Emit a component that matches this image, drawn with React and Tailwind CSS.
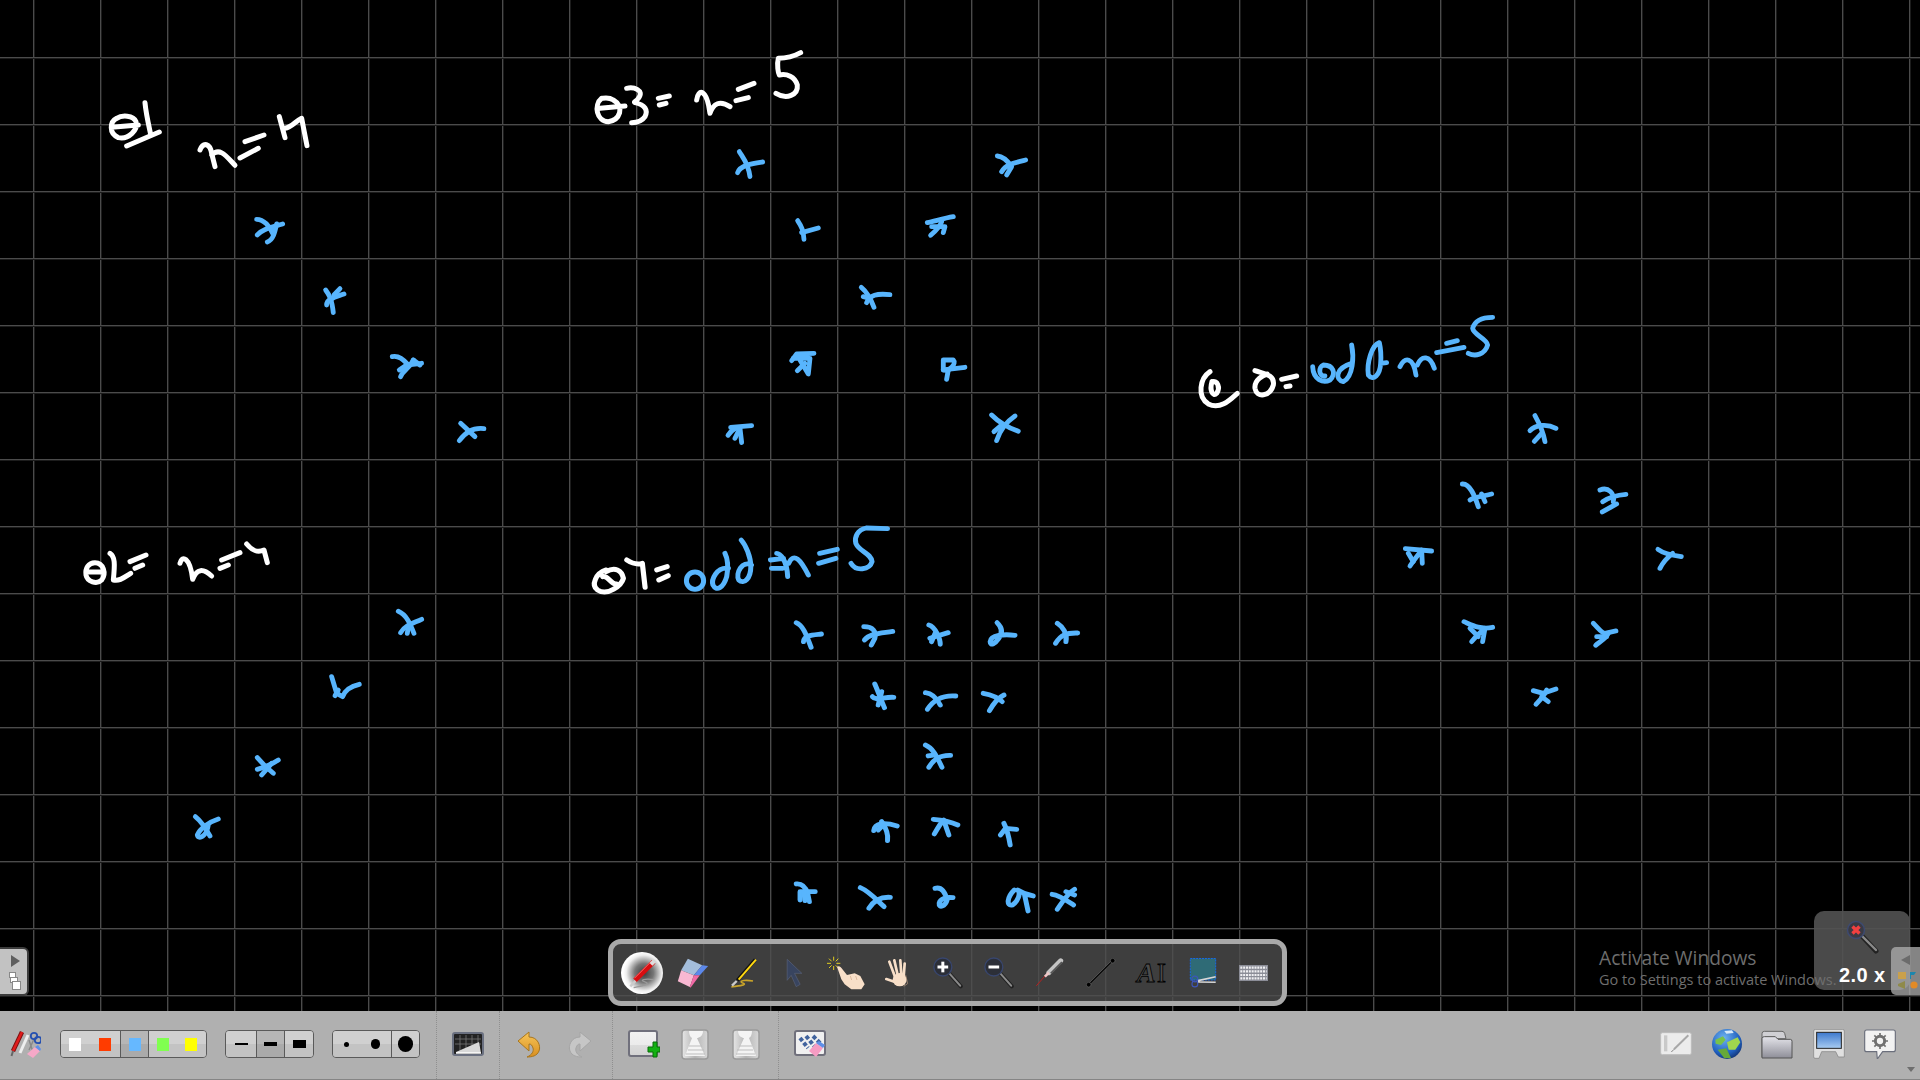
import React from "react";

const sets = [
  {
    t: "translate(60 40) scale(.3333)",
    white: [
      "M170 235C150 245 145 280 175 293C205 300 235 270 228 245C220 225 185 225 170 235M155 262L235 255",
      "M255 188C258 220 265 250 272 283",
      "M200 318L298 276",
      "M420 330C430 305 450 310 455 340L465 380M455 345C480 320 500 350 525 376",
      "M540 354L595 325",
      "M555 305L612 285",
      "M658 230L675 293M675 265C695 262 705 245 725 235L741 317",
    ],
    blue: [
      "M590 538C612 538 630 560 638 580",
      "M592 585C610 565 640 560 668 552",
      "M622 606C640 600 645 575 650 552",
      "M797 750C808 765 815 775 820 818",
      "M800 795C800 775 830 770 852 762",
      "M822 765L840 746",
      "M997 950C1020 945 1035 965 1045 975L1085 970",
      "M1060 960L1080 975",
      "M1022 1010C1030 990 1050 985 1060 960",
      "M1018 990L1040 975",
      "M1202 1150L1245 1190",
      "M1198 1202C1215 1180 1235 1162 1272 1166",
    ],
  },
  {
    t: "translate(570 30) scale(.3333)",
    white: [
      "M95 205C70 225 80 275 115 275C150 270 165 230 130 210C115 200 100 205 95 205M90 235L165 228",
      "M170 175C190 170 225 180 205 205C198 215 190 215 195 218C225 225 235 240 225 260C215 275 195 278 185 278",
      "M265 205L298 198",
      "M268 225L288 220",
      "M380 210C385 175 410 175 420 250C430 220 450 210 480 230",
      "M505 178L552 160",
      "M498 212L535 203",
      "M692 68C670 80 645 85 625 85C620 105 625 130 628 135C650 130 675 140 682 165C685 195 650 210 618 190",
    ],
    blue: [
      "M508 365C520 385 535 400 540 440",
      "M503 428C510 405 550 400 578 396",
      "M1282 378C1305 380 1318 400 1325 410L1310 435",
      "M1295 425C1310 400 1340 398 1367 390",
      "M683 572C695 590 700 600 702 628",
      "M695 608L745 594",
      "M1150 560C1120 565 1090 575 1072 578",
      "M1085 590L1125 590L1120 608",
      "M1082 616C1100 600 1110 590 1115 575",
      "M874 772C890 785 900 800 912 832",
      "M890 818C900 795 920 790 960 794",
      "M880 800L900 805",
      "M732 970L680 972L665 992",
      "M670 985L720 985L715 1032L690 990",
      "M682 1022L705 1000",
      "M1120 990L1120 1020C1140 1025 1160 1000 1150 990Z",
      "M1120 1020L1185 1012",
      "M1135 1020L1130 1048",
      "M482 1192L545 1187",
      "M474 1216C485 1200 500 1190 510 1195L515 1238",
      "M495 1225L505 1205",
      "M1265 1155C1285 1175 1320 1195 1345 1204",
      "M1280 1232C1290 1200 1310 1175 1335 1158",
      "M1272 1205L1295 1185",
    ],
  },
  {
    t: "translate(570 510) scale(.3444 .3333)",
    white: [
      "M105 180C75 190 60 225 80 240C110 260 150 225 155 205C150 180 130 170 105 185M95 200C110 195 120 225 135 222",
      "M165 150C180 160 195 165 210 160L218 232",
      "M252 180L282 170",
      "M258 210L285 197",
    ],
    blue: [
      "M338 212A25 26 0 1 0 388 212A25 26 0 1 0 338 212",
      "M460 175C425 170 410 210 415 225C425 245 445 235 455 200C460 170 460 150 450 130",
      "M527 165C500 150 480 190 490 210C505 225 525 205 525 170C525 140 510 105 497 90",
      "M582 150L620 145M585 175L618 175M600 130C610 130 630 150 632 200M635 160C650 125 670 150 692 195",
      "M722 160L772 145",
      "M725 130L776 118",
      "M922 56L860 54C835 60 825 80 830 100C840 125 875 130 877 155C870 180 830 185 816 160",
      "M657 338C675 345 685 370 700 412",
      "M678 395C680 375 705 375 730 372",
      "M853 350C880 350 890 365 885 385L875 405",
      "M855 390C870 370 900 370 937 364",
      "M1042 345C1060 350 1075 385 1075 403",
      "M1045 385L1098 368",
      "M1050 395L1060 370",
      "M1240 338C1252 350 1260 365 1245 385C1235 400 1220 410 1220 395C1222 375 1260 372 1292 376",
      "M1415 340C1430 350 1445 370 1440 395",
      "M1410 400C1425 375 1440 368 1474 369",
      "M885 522C895 545 905 575 913 593",
      "M878 560C890 575 910 560 940 562",
      "M895 585L905 545",
      "M1032 548C1050 550 1065 565 1075 585",
      "M1038 598C1055 570 1080 555 1120 558",
      "M1200 550C1225 555 1245 565 1255 575",
      "M1218 602C1230 580 1240 565 1260 555",
      "M1032 705C1055 715 1065 740 1080 772",
      "M1042 772C1055 750 1070 735 1105 736",
      "M1040 738L1060 735",
      "M882 962C885 940 910 935 950 948",
      "M905 935C915 950 925 970 922 992",
      "M895 960L905 950",
      "M1055 928C1080 930 1105 935 1126 945",
      "M1058 972C1070 950 1080 935 1085 930L1100 975",
      "M1260 940C1270 960 1275 985 1278 1005",
      "M1250 975L1265 955L1297 958",
      "M657 1122C675 1120 685 1135 690 1150L695 1175",
      "M668 1170L668 1145L712 1145",
      "M682 1172L680 1150",
      "M843 1133C870 1145 890 1170 912 1190",
      "M868 1195C880 1175 900 1160 930 1162",
      "M1060 1135C1080 1130 1090 1150 1095 1170C1090 1190 1070 1195 1072 1180C1075 1165 1095 1160 1112 1163",
      "M1290 1140C1270 1160 1265 1190 1285 1185C1300 1175 1310 1150 1300 1140C1315 1150 1330 1155 1345 1158M1320 1155L1330 1203",
      "M1400 1153C1420 1155 1440 1170 1462 1185",
      "M1415 1198C1430 1175 1445 1150 1465 1138",
      "M1440 1145L1465 1155",
    ],
  },
  {
    t: "translate(1180 300) scale(.3333)",
    white: [
      "M90 215C60 235 50 290 85 312C120 330 150 300 172 280",
      "M96 245C112 240 122 262 110 280C98 292 88 270 96 245",
      "M225 212C255 222 285 225 280 255C270 290 230 295 225 265C222 240 250 225 262 222",
      "M305 238L350 228",
      "M318 260L330 258",
    ],
    blue: [
      "M398 200C400 240 430 250 450 240C470 220 460 195 430 195C415 200 415 230 435 228",
      "M515 135C522 170 520 230 490 245C465 240 465 205 515 190",
      "M598 128C575 135 560 190 565 225C580 245 600 225 602 190C604 165 602 145 598 128M602 190L620 188",
      "M660 200C675 170 700 170 708 225M712 195C725 165 750 165 763 205",
      "M770 158L852 142",
      "M800 130L832 122",
      "M938 52C910 52 885 60 878 85C880 105 920 115 923 135C915 165 885 170 865 160",
      "M1065 347C1075 365 1090 395 1095 425",
      "M1050 392C1065 375 1100 370 1128 385",
      "M1063 424L1085 400",
      "M847 552C870 550 885 590 895 620",
      "M870 600C885 590 905 590 935 582",
      "M905 582L915 605",
      "M1260 570C1285 560 1305 580 1300 605",
      "M1268 605C1290 590 1310 585 1338 583",
      "M1267 636L1310 612",
      "M676 746L755 753",
      "M690 798C705 775 715 765 725 750L727 790",
      "M685 760L700 785",
      "M1434 748C1450 760 1470 765 1504 770",
      "M1440 805C1450 785 1465 770 1478 760",
      "M852 965C875 975 900 990 938 982",
      "M875 1025C890 1005 905 995 915 985L908 1025",
      "M870 985L895 1010",
      "M1240 970C1255 985 1265 1000 1275 1000L1308 993",
      "M1247 1036C1260 1025 1280 1015 1285 1000",
      "M1250 1010L1280 1010",
      "M1060 1172L1090 1180L1128 1167",
      "M1068 1213C1085 1195 1095 1185 1100 1170M1085 1190L1105 1205",
    ],
  },
  {
    t: "translate(60 530) scale(.3333)",
    white: [
      "M105 98C85 98 75 115 78 135C82 155 110 165 125 150C140 130 130 98 105 98M85 126L128 126",
      "M150 70C165 80 165 100 160 150C180 155 195 140 212 130",
      "M210 95L258 75",
      "M225 115L248 105",
      "M360 100C365 75 390 80 398 148C410 115 430 115 455 138",
      "M480 115L505 105",
      "M485 90L540 68",
      "M560 42C575 60 590 70 612 60L622 98",
    ],
    blue: [
      "M1015 244C1040 255 1050 280 1062 310",
      "M1022 308C1035 285 1060 280 1085 268",
      "M1042 310L1045 290",
      "M815 440L830 490L848 500C855 480 875 468 898 463",
      "M825 497L835 480",
      "M592 683L615 708L640 730",
      "M592 718C620 710 640 700 655 690",
      "M605 735L635 700",
      "M406 860C425 875 440 900 450 918",
      "M475 867C450 875 420 895 412 915C415 930 440 920 445 885",
    ],
  },
];

function Ink() {
  return (
    <svg className="absolute left-0 top-0 w-[1920px] h-[1011px]" viewBox="0 0 1920 1011" fill="none" strokeLinecap="round" strokeLinejoin="round">
      {sets.map((s, i) => (
        <g key={i} transform={s.t}>
          <g stroke="#ffffff" strokeWidth="15">
            {s.white.map((d, j) => <path key={j} d={d} />)}
          </g>
          <g stroke="#58b5fd" strokeWidth="14.5">
            {s.blue.map((d, j) => <path key={j} d={d} />)}
          </g>
        </g>
      ))}
    </svg>
  );
}

const Defs = () => (
  <svg className="absolute w-0 h-0">
    <defs>
      <radialGradient id="penBall" cx=".55" cy=".5" r=".5">
        <stop offset="0" stopColor="#3a3a3a" />
        <stop offset=".45" stopColor="#777" />
        <stop offset=".85" stopColor="#eee" />
        <stop offset="1" stopColor="#fff" />
      </radialGradient>
      <linearGradient id="pageG" x1="0" y1="0" x2="0" y2="1">
        <stop offset="0" stopColor="#f2f2f2" />
        <stop offset=".55" stopColor="#ebebeb" />
        <stop offset=".56" stopColor="#dcdcdc" />
        <stop offset="1" stopColor="#d2d2d2" />
      </linearGradient>
      <linearGradient id="sideG" x1="0" y1="0" x2="1" y2="0">
        <stop offset="0" stopColor="#e6e6e6" />
        <stop offset=".5" stopColor="#b4b4b4" />
        <stop offset="1" stopColor="#d8d8d8" />
      </linearGradient>
      <linearGradient id="undoG" x1="0" y1="0" x2="0" y2="1">
        <stop offset="0" stopColor="#f7c65a" />
        <stop offset="1" stopColor="#d98f20" />
      </linearGradient>
      <linearGradient id="folderG" x1="0" y1="0" x2="0" y2="1">
        <stop offset="0" stopColor="#e4e4ea" />
        <stop offset="1" stopColor="#8e8e98" />
      </linearGradient>
      <linearGradient id="screenG" x1="0" y1="0" x2="0" y2="1">
        <stop offset="0" stopColor="#3d78cc" />
        <stop offset="1" stopColor="#a8ccf2" />
      </linearGradient>
      <radialGradient id="globeG" cx=".4" cy=".3" r=".75">
        <stop offset="0" stopColor="#6fb3f0" />
        <stop offset=".7" stopColor="#1f5fbf" />
        <stop offset="1" stopColor="#12306e" />
      </radialGradient>
    </defs>
  </svg>
);

const PenBall = () => (
  <svg width="42" height="42" viewBox="30 33 126 126">
    <circle cx="93" cy="96" r="63" fill="url(#penBall)" />
    <path d="M68 140C90 135 125 130 100 122C85 118 100 112 128 116" fill="none" stroke="#9a9a9a" strokeWidth="4" />
    <path d="M75 118L58 136" stroke="#ccc" strokeWidth="7" />
    <path d="M128 62L72 118" stroke="#d80d10" strokeWidth="15" />
    <path d="M122 60L70 112" stroke="#ff6a6a" strokeWidth="3" />
    <path d="M130 60L120 70" stroke="#ddd" strokeWidth="12" />
  </svg>
);
const Eraser = () => (
  <svg width="32" height="30" viewBox="200 48 95 90">
    <path d="M232 50L275 70L250 100L212 85Z" fill="#a4bedc" />
    <path d="M275 70L293 72L268 100L250 100Z" fill="#5c88ea" />
    <path d="M212 85L250 100L238 135L202 118Z" fill="#f9b8d2" />
    <path d="M250 100L268 100L240 137L238 135Z" fill="#f26aa6" />
  </svg>
);
const Highlighter = () => (
  <svg width="28" height="32" viewBox="356 50 84 96" fill="none">
    <path d="M360 140C385 136 412 134 392 127C382 120 405 118 425 122" stroke="#c9a42a" strokeWidth="5" />
    <path d="M432 58L378 120" stroke="#111" strokeWidth="11" />
    <path d="M434 58L382 118" stroke="#ffd812" strokeWidth="6" />
    <path d="M376 122L362 136" stroke="#ccc" strokeWidth="7" />
  </svg>
);
const Arrow = () => (
  <svg width="17" height="28" viewBox="530 54 50 84">
    <path d="M533 55L577 97L555 97L572 130L560 137L545 103L533 118Z" fill="#38445f" stroke="#59627a" strokeWidth="2" />
  </svg>
);
const TapHand = () => (
  <svg width="38" height="34" viewBox="642 40 114 102" fill="none">
    <path d="M662 42V54M662 70V82M642 62H654M670 62H682M648 48L656 56M676 48L668 56M648 76L656 68M676 76L668 68" stroke="#ffe81a" strokeWidth="2.5" />
    <path d="M672 72C678 68 684 72 690 82L702 97L725 92L742 100L755 125L745 140L715 140L695 125L685 110Z" fill="#f8dfc8" />
    <path d="M712 100L716 112M728 100L732 112" stroke="#cfa98a" strokeWidth="2" />
  </svg>
);
const Hand = () => (
  <svg width="26" height="28" viewBox="820 52 76 84" fill="none">
    <path d="M835 60L852 105M850 56L860 100M868 56L871 100M881 66L878 105M826 112L850 120" stroke="#f8dfc8" strokeWidth="8" strokeLinecap="round" />
    <ellipse cx="866" cy="114" rx="21" ry="20" fill="#f8dfc8" />
    <path d="M884 100L890 126L878 134" stroke="#b99a80" strokeWidth="2" />
  </svg>
);
const Mag = ({ plus }) => (
  <svg width="31" height="32" viewBox="98 50 92 96" fill="none">
    <path d="M148 98L184 138" stroke="#222" strokeWidth="12" strokeLinecap="round" />
    <path d="M150 100L182 136" stroke="#8a8a8a" strokeWidth="6" strokeLinecap="round" />
    <circle cx="130" cy="80" r="27" fill="#2c2f38" stroke="#38466e" strokeWidth="4" />
    <path d="M114 80H146" stroke="#fff" strokeWidth="9" />
    {plus && <path d="M130 64V96" stroke="#fff" strokeWidth="9" />}
  </svg>
);
const Laser = () => (
  <svg width="29" height="30" viewBox="254 52 88 90" fill="none">
    <path d="M285 105L258 136" stroke="#b81f1f" strokeWidth="3" />
    <path d="M332 60L296 96" stroke="#c4c4c4" strokeWidth="15" strokeLinecap="round" />
    <path d="M336 64L302 98" stroke="#555" strokeWidth="6" />
    <path d="M296 96L284 108" stroke="#f0c8c8" strokeWidth="8" />
  </svg>
);
const LineTool = () => (
  <svg width="30" height="30" viewBox="404 50 90 90">
    <path d="M412 130L484 58" stroke="#777" strokeWidth="6" />
    <path d="M412 130L484 58" stroke="#000" strokeWidth="4" />
    <circle cx="412" cy="130" r="7" fill="#000" stroke="#777" strokeWidth="1.5" />
    <circle cx="484" cy="58" r="7" fill="#000" stroke="#777" strokeWidth="1.5" />
  </svg>
);
const AiTool = () => (
  <div className="flex items-center font-['Liberation_Serif',serif] text-[28px] leading-[34px] text-[#4c4c4c] [-webkit-text-stroke:0.8px_#000]">
    <span className="italic font-bold">A</span>
    <span className="ml-[1px]">I</span>
  </div>
);
const Snip = () => (
  <svg width="28" height="31" viewBox="714 58 86 94" fill="none">
    <rect x="718" y="62" width="78" height="66" fill="#2f6b76" stroke="#1569ea" strokeWidth="3" strokeDasharray="6 3" />
    <circle cx="732" cy="125" r="9" stroke="#3d55b8" strokeWidth="3.5" />
    <circle cx="732" cy="140" r="9" stroke="#3d55b8" strokeWidth="3.5" />
    <path d="M742 130L796 118M742 134L796 135" stroke="#d6d6d6" strokeWidth="5" />
  </svg>
);
const KeyboardIcon = () => (
  <svg width="29" height="16" viewBox="866 72 87 48" fill="none">
    <rect x="866" y="72" width="87" height="48" fill="#8b8d97" />
    <path d="M870 80H949M870 91H949M870 102H949M870 112H949" stroke="#efeff2" strokeWidth="6.5" strokeDasharray="6 2.5" />
  </svg>
);

const tools = [
  <PenBall />, <Eraser />, <Highlighter />, <Arrow />, <TapHand />, <Hand />,
  <Mag plus />, <Mag />, <Laser />, <LineTool />, <AiTool />, <Snip />, <KeyboardIcon />,
];

function Palette() {
  return (
    <div className="absolute left-[608px] top-[939px] w-[679px] h-[67px] rounded-[13px] border-[5px] border-[#a9a9a9] bg-[#4d4d4d]/80 flex items-center justify-center">
      {tools.map((t, i) => (
        <div key={i} className="w-[51px] h-[48px] flex items-center justify-center">{t}</div>
      ))}
    </div>
  );
}

const cell = "h-full flex items-center bg-[linear-gradient(#d0d0d0_50%,#c3c3c3_50%)]";
const cellSel = "h-full flex items-center bg-[linear-gradient(#b6b6b6_50%,#aaaaaa_50%)]";
const group = "flex h-[28px] rounded-[4px] border border-[#5a5a5a] overflow-hidden";

function Colors() {
  return (
    <div className={`${group} w-[147px]`}>
      <div className={`${cell} w-[60px] border-r border-[#5a5a5a] justify-between pl-[8px] pr-[9px]`}>
        <div className="w-[12px] h-[13px] bg-white" />
        <div className="w-[12px] h-[13px] bg-[#ff3c00]" />
      </div>
      <div className={`${cellSel} w-[28px] border-r border-[#5a5a5a] justify-center`}>
        <div className="w-[12px] h-[13px] bg-[#66b8ff]" />
      </div>
      <div className={`${cell} flex-1 justify-between pl-[8px] pr-[9px]`}>
        <div className="w-[12px] h-[13px] bg-[#80ff50]" />
        <div className="w-[12px] h-[13px] bg-[#ffff00]" />
      </div>
    </div>
  );
}
function Widths() {
  return (
    <div className={`${group} w-[89px]`}>
      <div className={`${cell} w-[31px] border-r border-[#5a5a5a] justify-center`}>
        <div className="w-[13px] h-[2px] bg-black" />
      </div>
      <div className={`${cellSel} w-[28px] border-r border-[#5a5a5a] justify-center`}>
        <div className="w-[13px] h-[4px] bg-black" />
      </div>
      <div className={`${cell} flex-1 justify-center`}>
        <div className="w-[13px] h-[8px] bg-black" />
      </div>
    </div>
  );
}
function Dots() {
  return (
    <div className={`${group} w-[88px]`}>
      <div className={`${cell} w-[59px] border-r border-[#5a5a5a] pl-[11px]`}>
        <div className="w-[5px] h-[5px] rounded-full bg-black" />
        <div className="ml-[22px] w-[9px] h-[10px] rounded-full bg-black" />
      </div>
      <div className={`${cell} flex-1 justify-center`}>
        <div className="w-[15px] h-[16px] rounded-full bg-black" />
      </div>
    </div>
  );
}

const PensIcon = () => (
  <svg width="31" height="28" viewBox="0 0 31 28" fill="none" className="shrink-0">
    <path d="M12 2L3 21" stroke="#7a1010" strokeWidth="4.5" />
    <path d="M12 2L3 21" stroke="#e01b1b" strokeWidth="2.6" />
    <path d="M3 21L1.5 26" stroke="#666" strokeWidth="2" />
    <path d="M18 5L10 23" stroke="#eee" strokeWidth="3" />
    <path d="M19 10L23 22M24 9L19 20" stroke="#888" strokeWidth="1.4" />
    <circle cx="24" cy="6" r="3.2" stroke="#2550b0" strokeWidth="1.8" />
    <circle cx="28" cy="10" r="3.2" stroke="#2550b0" strokeWidth="1.8" />
    <path d="M17 24L25 17L30 21L23 28Z" fill="#f6a8c8" />
    <path d="M25 17L28 15L31 19L30 21Z" fill="#5f8fe8" />
  </svg>
);
const GridIcon = () => (
  <svg width="32" height="24" viewBox="0 0 32 24" fill="none">
    <rect x="1" y="1" width="30" height="22" rx="2" fill="#222" stroke="#6a7080" strokeWidth="2" />
    <path d="M3 7H29M3 12H29M8 3V21M14 3V21M20 3V21M26 3V21" stroke="#777" strokeWidth=".8" />
    <path d="M4 20L27 10L29 21H4Z" fill="#d8d8d8" />
    <path d="M4 21H29" stroke="#fff" strokeWidth="1.5" />
  </svg>
);
const Undo = ({ redo }) => (
  <svg width="24" height="27" viewBox="0 0 24 27" className={redo ? "-scale-x-100" : ""}>
    <path
      d="M1 10L12 1V6C21 6 24 15 22 20C20 25 15 26 10 26C15 24 17 20 16 17C15 14 14 13 12 13V20Z"
      fill={redo ? "#c6c6c6" : "url(#undoG)"}
      stroke={redo ? "#a6a6a6" : "#a8761f"}
      strokeWidth="1"
    />
  </svg>
);
const NewPage = () => (
  <svg width="32" height="28" viewBox="0 0 32 28">
    <rect x="1" y="1" width="28" height="25" rx="2" fill="url(#pageG)" stroke="#70707c" strokeWidth="2" />
    <path d="M25 12V17H20V22H25V27H29V22H32V17H29V12Z" fill="#12b012" stroke="#066d06" strokeWidth="1" />
  </svg>
);
const PagePrev = ({ next }) => (
  <svg width="28" height="31" viewBox="0 0 28 31">
    <rect x="1" y="1" width="26" height="29" rx="3" fill="url(#sideG)" stroke="#9a9a9a" strokeWidth="1.5" />
    <g transform={next ? "translate(28 0) scale(-1 1)" : ""}>
      <path d="M8 2H22C22 7 18 9 16 9L24 27H4L11 9C9 8 8 5 8 2Z" fill="#f4f4f4" />
      <path d="M8 17H21M7 21H23M5 25H24" stroke="#bdbdbd" strokeWidth="1" />
    </g>
  </svg>
);
const ClearIcon = () => (
  <svg width="32" height="28" viewBox="0 0 32 28">
    <rect x="1" y="1" width="30" height="24" rx="2" fill="#f0f0f0" stroke="#70707c" strokeWidth="2" />
    <path d="M6 8L14 18M12 6L21 17M19 6L27 14" stroke="#41639e" strokeWidth="4" strokeDasharray="4 2" />
    <path d="M15 21L22 13L29 18L22 27Z" fill="#f69cc3" />
    <path d="M22 13L25 11L31 15L29 18Z" fill="#5f8fe8" />
  </svg>
);

const Tablet = () => (
  <svg width="32" height="24" viewBox="180 70 96 72" fill="none">
    <rect x="182" y="72" width="92" height="66" rx="5" fill="#ececec" stroke="#bcbcbc" strokeWidth="3" />
    <rect x="192" y="80" width="10" height="48" fill="#c9c9c9" />
    <path d="M265 80L222 122" stroke="#a8a8a8" strokeWidth="6" />
    <path d="M222 122L214 130" stroke="#808080" strokeWidth="3" />
  </svg>
);
const Globe = () => (
  <svg width="30" height="30" viewBox="335 60 90 90">
    <circle cx="380" cy="105" r="45" fill="url(#globeG)" />
    <path d="M345 92L368 82L376 92L362 108L346 104Z" fill="#79c24a" />
    <path d="M380 100L412 85L420 100L405 122L385 122Z" fill="#a0d64e" />
    <path d="M352 122L378 118L392 147L372 148Z" fill="#66a93a" />
    <path d="M372 66L395 64L400 72L378 74Z" fill="#d7e9f9" />
  </svg>
);
const Folder = () => (
  <svg width="32" height="29" viewBox="487 64 96 87">
    <path d="M490 145V75Q490 68 497 68H550Q556 68 558 74L562 90H500V145Z" fill="#d0d0d4" stroke="#666" strokeWidth="3" />
    <path d="M490 148V90Q490 84 497 84H530L538 92H575Q580 92 580 98V148Z" fill="url(#folderG)" stroke="#555" strokeWidth="3" />
  </svg>
);
const Monitor = () => (
  <svg width="32" height="30" viewBox="640 62 96 90">
    <path d="M642 68Q642 63 648 63H728Q734 63 734 68V146L716 146L708 130H666L658 150H646Q642 150 642 146Z" fill="#e0e0e0" stroke="#8a8a8a" strokeWidth="2.5" />
    <rect x="651" y="72" width="74" height="48" fill="url(#screenG)" stroke="#222" strokeWidth="3" />
  </svg>
);
const Settings = () => (
  <svg width="32" height="30" viewBox="792 60 96 90">
    <path d="M800 63H880Q886 63 886 69V122Q886 128 880 128H848L832 150L830 128H800Q794 128 794 122V69Q794 63 800 63Z" fill="#f2f2f2" stroke="#6b6f7c" strokeWidth="3.5" />
    <circle cx="840" cy="96" r="14" fill="none" stroke="#707070" strokeWidth="9" />
    <path d="M840 72V120M816 96H864M823 79L857 113M857 79L823 113" stroke="#707070" strokeWidth="5" strokeDasharray="8 32 8" />
  </svg>
);

const Sep = () => <div className="w-0 h-full border-l border-dotted border-[#8f8f8f]" />;

function BottomBar() {
  return (
    <div className="h-[69px] shrink-0 flex items-stretch bg-[#b0b0b0] border-b border-[#858585]">
      <div className="w-[436px] flex items-center pl-[10px] pb-[2px] shrink-0">
        <PensIcon />
        <div className="ml-[19px]"><Colors /></div>
        <div className="ml-[18px]"><Widths /></div>
        <div className="ml-[18px]"><Dots /></div>
      </div>
      <Sep />
      <div className="w-[62px] flex items-center justify-center pb-[2px] shrink-0"><GridIcon /></div>
      <Sep />
      <div className="w-[112px] flex items-center pl-[17px] gap-[27px] pb-[2px] shrink-0">
        <Undo />
        <Undo redo />
      </div>
      <Sep />
      <div className="w-[165px] flex items-center pl-[15px] pb-[2px] shrink-0">
        <NewPage />
        <div className="ml-[21px]"><PagePrev /></div>
        <div className="ml-[23px]"><PagePrev next /></div>
      </div>
      <Sep />
      <div className="flex items-center pl-[15px] pb-[2px]"><ClearIcon /></div>
      <div className="flex-1 flex items-center justify-end pr-[24px] gap-[19.5px] pb-[2px]">
        <Tablet />
        <Globe />
        <Folder />
        <Monitor />
        <Settings />
      </div>
      <div className="absolute right-[5px] bottom-[8px] w-0 h-0 border-x-[4px] border-x-transparent border-t-[5px] border-t-[#6e6e6e]" />
    </div>
  );
}

function LeftTab() {
  return (
    <div className="absolute left-0 top-[947px] w-[29px] h-[49px] rounded-r-[6px] border-[2px] border-l-0 border-[#3c3c3c] bg-[#c2c2c2] flex flex-col items-center pl-[3px]">
      <div className="mt-[6px] w-0 h-0 border-y-[6px] border-y-transparent border-l-[9px] border-l-[#5e5e5e]" />
      <div className="relative mt-[5px] w-[12px] h-[18px]">
        <div className="absolute left-0 top-0 w-[7px] h-[6px] bg-white border border-[#888]" />
        <div className="absolute left-[1px] top-[5px] w-[8px] h-[6px] bg-white border border-[#888]" />
        <div className="absolute left-[3px] top-[9px] w-[9px] h-[9px] bg-white border border-[#888]" />
      </div>
    </div>
  );
}

function ZoomBadge() {
  return (
    <div className="absolute left-[1814px] top-[911px] w-[96px] h-[79px] rounded-[10px] bg-[#525252]/90">
      <svg className="absolute left-[32px] top-[9px]" width="34" height="34" viewBox="0 0 34 34" fill="none">
        <path d="M15 15L30 31" stroke="#222" strokeWidth="5" strokeLinecap="round" />
        <path d="M16 16L30 30" stroke="#8a8a8a" strokeWidth="2.4" strokeLinecap="round" />
        <circle cx="10" cy="10" r="8.5" fill="#3a3a44" stroke="#3d4a70" strokeWidth="1.5" />
        <path d="M6.5 6.5L13.5 13.5M13.5 6.5L6.5 13.5" stroke="#f04040" strokeWidth="3.4" />
      </svg>
      <div className="absolute left-[25px] top-[52px] text-[20px] leading-[24px] font-bold text-white font-['Liberation_Sans',sans-serif] tracking-[.4px] whitespace-nowrap">2.0 x</div>
    </div>
  );
}

function RightTab() {
  return (
    <div className="absolute left-[1891px] top-[947px] w-[29px] h-[48px] rounded-l-[5px] bg-[#b0b0b0]/75">
      <div className="absolute left-[10px] top-[8px] w-0 h-0 border-y-[5px] border-y-transparent border-r-[9px] border-r-[#6b6b6b]" />
      <svg className="absolute left-[6px] top-[24px]" width="22" height="20" viewBox="0 0 22 20">
        <rect x="1" y="1" width="8" height="7" fill="#c9a04c" />
        <path d="M14 1H19L17 4H14V8H13V1Z" fill="#1b86ad" />
        <path d="M1 13L8 10V18L1 15Z" fill="#8f8a4a" />
        <circle cx="17" cy="14" r="3.6" fill="#e28a26" />
      </svg>
    </div>
  );
}

function Watermark() {
  return (
    <div className="absolute left-[1599px] top-[945px] font-['Open_Sans',sans-serif] text-[#6e6e6e] whitespace-nowrap">
      <div className="text-[19.2px] leading-[26px]">Activate Windows</div>
      <div className="text-[14.5px] leading-[18px]">Go to Settings to activate Windows.</div>
    </div>
  );
}

export default function App() {
  return (
    <div className="relative w-[1920px] h-[1080px] overflow-hidden flex flex-col bg-black">
      <Defs />
      <div className="relative flex-1 bg-black bg-[linear-gradient(#4b4b4b_1px,#1c1c1c_1px,#1c1c1c_2px,transparent_2px),linear-gradient(90deg,#4b4b4b_1px,#1c1c1c_1px,#1c1c1c_2px,transparent_2px)] bg-[size:67px_67px] bg-[position:33px_57px]">
        <Ink />
        <LeftTab />
        <ZoomBadge />
        <Watermark />
        <RightTab />
        <Palette />
      </div>
      <BottomBar />
    </div>
  );
}
